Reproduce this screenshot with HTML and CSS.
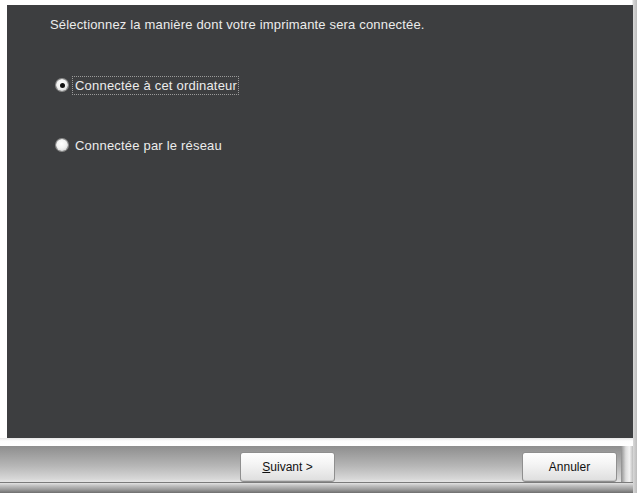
FILE: index.html
```html
<!DOCTYPE html>
<html lang="fr">
<head>
<meta charset="utf-8">
<title>Connexion de l'imprimante</title>
<link rel="stylesheet" href="styles.css">
</head>
<body>
<div class="window">
  <div class="panel">
    <p class="intro">Sélectionnez la manière dont votre imprimante sera connectée.</p>
    <div class="options">
      <label class="option">
        <span class="radio checked"><span class="dot"></span></span>
        <span class="label focus">Connectée à cet ordinateur</span>
      </label>
      <label class="option">
        <span class="radio"></span>
        <span class="label">Connectée par le réseau</span>
      </label>
    </div>
  </div>
  <div class="footer">
    <div class="footer-strip"></div>
    <div class="footer-bar">
      <button class="btn btn-next"><u>S</u>uivant &gt;</button>
      <button class="btn btn-cancel">Annuler</button>
      <div class="edge"></div>
    </div>
    <div class="footer-base"></div>
  </div>
</div>
</body>
</html>
```
FILE: styles.css
```css
html, body {
  margin: 0;
  padding: 0;
  background: #ffffff;
}
body {
  width: 637px;
  height: 493px;
  overflow: hidden;
  font-family: "Liberation Sans", Arial, sans-serif;
}
.window {
  display: flex;
  flex-direction: column;
  padding: 5px 0 0 7px;
  height: 488px;
  background: linear-gradient(to right, #ffffff 0, #ffffff 632px, #d8d8d8 633px, #bcbcbc 637px);
}
.panel {
  width: 626px;
  height: 433px;
  background: #3d3e40;
  color: #ececec;
  box-sizing: border-box;
  padding: 12px 0 0 43px;
}
.intro {
  margin: 0;
  font-size: 13px;
  line-height: 15px;
  letter-spacing: 0.17px;
}
.options {
  display: flex;
  flex-direction: column;
  gap: 42px;
  margin-top: 44px;
  margin-left: 6px;
}
.option {
  display: flex;
  align-items: center;
  gap: 4px;
  height: 18px;
  font-size: 13px;
  letter-spacing: 0.2px;
}
.radio {
  width: 12px;
  height: 12px;
  border-radius: 50%;
  background: radial-gradient(circle at 45% 40%, #ffffff 0, #f2f2f2 45%, #c8c8c8 100%);
  box-shadow: 0 0 0 1px #8c8c8c;
  display: flex;
  align-items: center;
  justify-content: center;
}
.dot {
  width: 5px;
  height: 5px;
  border-radius: 50%;
  background: #111111;
}
.label {
  padding: 1px 1px 1px 2px;
  border: 1px solid transparent;
}
.label.focus {
  border: 1px dotted #9a9a9a;
}
.footer {
  display: flex;
  flex-direction: column;
  margin-left: -7px;
  width: 633px;
}
.footer-strip {
  height: 8px;
  background: linear-gradient(to bottom, #e6e6e6 0, #fdfdfd 3px, #ffffff 100%);
}
.footer-bar {
  position: relative;
  height: 36px;
  display: flex;
  align-items: center;
  padding-left: 240px;
  background: linear-gradient(to bottom, #8e8e8e 0, #9c9c9c 20%, #b6b6b6 55%, #d6d6d6 90%, #e4e4e4 100%);
  border-bottom: 1px solid #7a7a7a;
}
.edge {
  position: absolute;
  right: 0;
  top: 0;
  bottom: 0;
  width: 12px;
  background: linear-gradient(to right, #8e8e8e 0, #dcdcdc 40%, #f2f2f2 70%, #bdbdbd 100%);
}
.btn {
  height: 30px;
  width: 95px;
  margin-top: 6px;
  border: 1px solid #8f8f8f;
  border-radius: 3px;
  background: linear-gradient(to bottom, #ffffff 0, #f4f4f4 40%, #dedede 100%);
  box-shadow: inset 0 -1px 0 #c6c6c6;
  font-family: "Liberation Sans", Arial, sans-serif;
  font-size: 12px;
  color: #111111;
  padding: 0;
}
.btn-cancel {
  margin-left: 187px;
}
.footer-base {
  height: 10px;
  background: linear-gradient(to bottom, #e2e2e2 0, #bdbdbd 30%, #a0a0a0 60%, #6e6e6e 100%);
}
```
